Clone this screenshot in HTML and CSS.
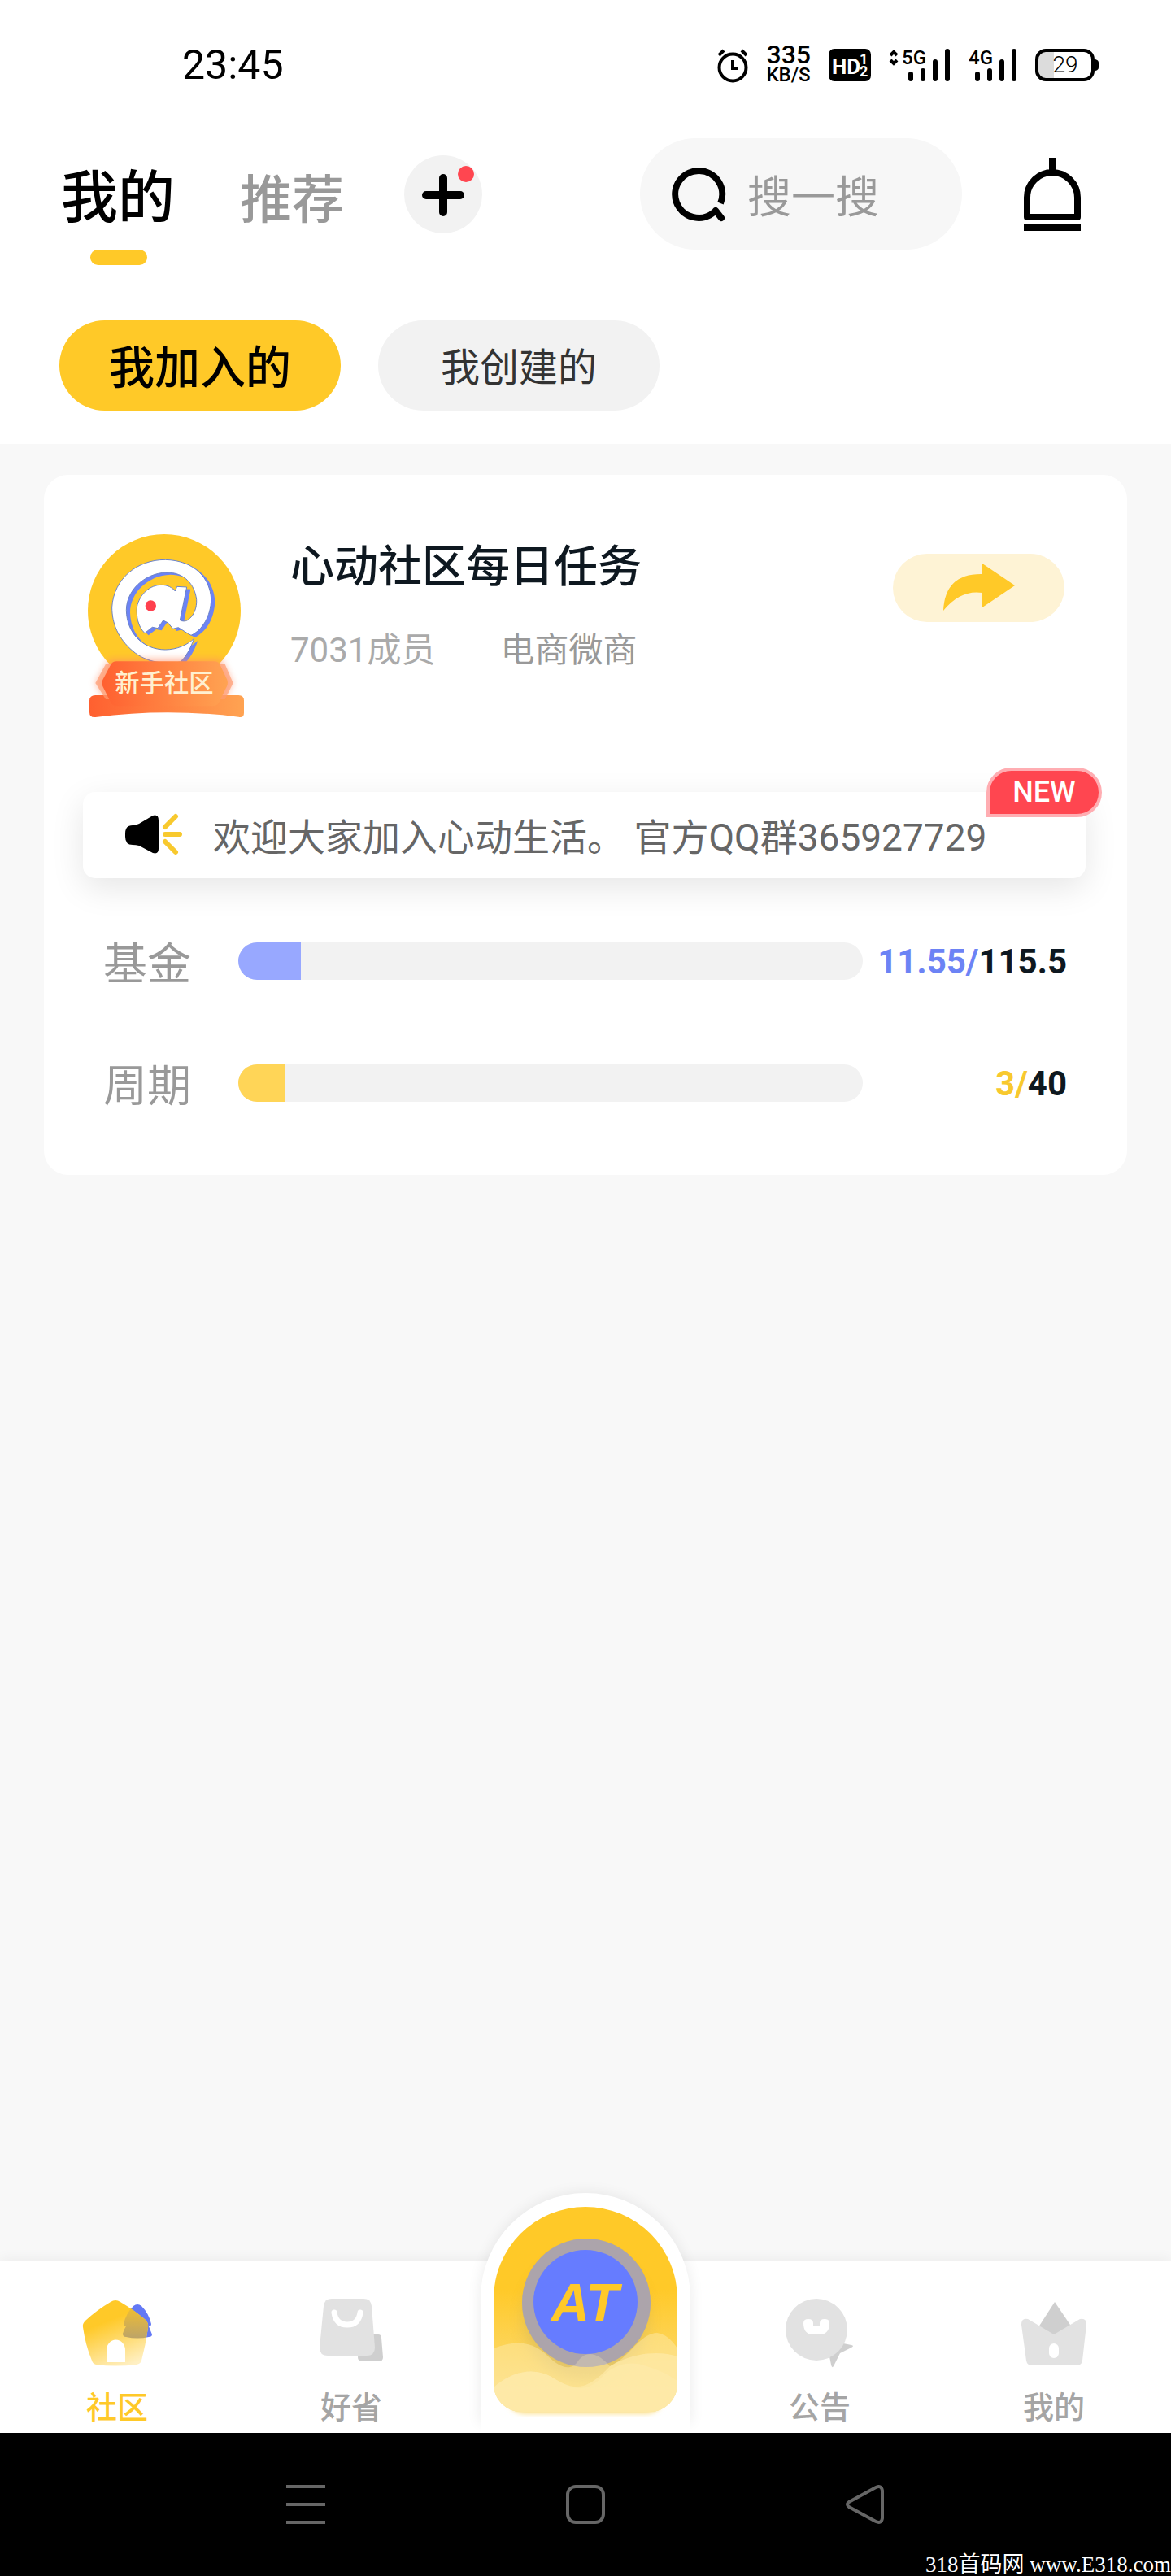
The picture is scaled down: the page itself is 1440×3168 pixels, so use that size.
FILE: index.html
```
<!DOCTYPE html>
<html lang="zh-CN">
<head>
    <meta charset="UTF-8">
    <meta name="viewport" content="width=device-width, initial-scale=1.0">
    <title>我的社区</title>
    <link rel="stylesheet" href="styles.css">
</head>
<body>
    <header class="header">
        <div class="status-bar">
            <span class="clock">23:45</span>
            <div class="status-icons">
                <svg width="38" height="42" viewBox="0 0 38 42" fill="none" stroke="#000" stroke-width="4">
                    <circle cx="19" cy="24" r="16.5"/>
                    <path d="M19 15v10h7M2 9l6-6M36 9l-6-6"/>
                </svg>
                <div class="net-speed"><span>335</span><small>KB/S</small></div>
                <svg width="52" height="40" viewBox="0 0 52 40">
                    <rect width="52" height="40" rx="7"/>
                    <text class="hd" x="4" y="31">HD</text>
                    <text class="hd-sub" x="38" y="19">1</text>
                    <text class="hd-sub" x="38" y="34">2</text>
                </svg>
                <svg width="76" height="40" viewBox="0 0 76 40">
                    <path d="M2 8l4-4 4 4M2 14l4 4 4-4" fill="none" stroke="#000" stroke-width="4"/>
                    <text class="net" x="16" y="19">5G</text>
                    <path d="M27 31v6M42 27v10M57 16v21M72 3v34" stroke="#000" stroke-width="6" stroke-linecap="round"/>
                </svg>
                <svg width="60" height="40" viewBox="0 0 60 40">
                    <text class="net" x="0" y="19">4G</text>
                    <path d="M11 31v6M26 27v10M41 16v21M56 3v34" stroke="#000" stroke-width="6" stroke-linecap="round"/>
                </svg>
                <svg width="78" height="40" viewBox="0 0 78 40">
                    <path d="M12 4h11v32H12a8 8 0 0 1-8-8V12a8 8 0 0 1 8-8z" fill="#dcdcdc"/>
                    <rect x="2" y="2" width="69" height="36" rx="11" fill="none" stroke="#000" stroke-width="4"/>
                    <path d="M74 13q4 1 4 4v6q0 3-4 4z"/>
                    <text class="battery" x="37" y="29">29</text>
                </svg>
            </div>
        </div>

        <div class="topbar">
            <nav class="tabs">
                <a href="#" class="tab active">我的</a>
                <a href="#" class="tab">推荐</a>
            </nav>
            <button class="add-btn" aria-label="添加">
                <svg width="96" height="96" viewBox="0 0 96 96">
                    <path d="M48 28v42M27 49h42" stroke="#000" stroke-width="10" stroke-linecap="round"/>
                    <circle cx="76" cy="23" r="10" fill="#ff4650"/>
                </svg>
            </button>
            <label class="search">
                <svg width="68" height="68" viewBox="0 0 68 68" fill="none" stroke="#000" stroke-width="8" stroke-linecap="round">
                    <path d="M61 45A29 29 0 1 0 53 56" stroke-linecap="butt"/>
                    <path d="M55 54l7 9"/>
                </svg>
                <input type="text" placeholder="搜一搜" aria-label="搜索">
            </label>
            <button class="bell-btn" aria-label="通知">
                <svg width="70" height="90" viewBox="0 0 70 90" fill="none" stroke="#000" stroke-width="8">
                    <path d="M35 0v17M4 73V49a31 31 0 0 1 62 0v24z" stroke-linejoin="round"/>
                    <path d="M0 86h70"/>
                </svg>
            </button>
        </div>

        <div class="filters">
            <button class="filter active">我加入的</button>
            <button class="filter">我创建的</button>
        </div>
    </header>

    <main class="content">
        <section class="card">
            <div class="card-head">
                <svg class="avatar" viewBox="75 75 600 705">
                    <defs>
                        <linearGradient id="ribbon" x1="0" x2="1">
                            <stop offset="0" stop-color="#ff6030"/>
                            <stop offset="1" stop-color="#ffa352"/>
                        </linearGradient>
                        <filter id="glow" x="-20%" y="-20%" width="140%" height="140%">
                            <feGaussianBlur stdDeviation="12"/>
                        </filter>
                        <path id="at" d="M476 466 C462 505 445 535 425 552 C370 562 300 555 250 512 C195 465 173 410 173 350 C180 245 265 175 370 175 C480 178 535 245 539 320 C538 385 505 435 465 454 C450 446 432 434 418 425 L398 430 L380 408 L362 399 L342 428 L322 424 L294 446 C268 420 263 385 265 350 C275 300 315 268 355 268 C378 268 396 278 406 291 L413 274 L449 276 L424 398 C432 403 444 403 452 398 C476 383 487 350 485 322 C478 265 440 222 375 222 C290 225 226 290 226 362 C228 445 285 506 370 507 C415 506 450 490 476 466 Z"/>
                    </defs>
                    <circle cx="366" cy="363" r="282" fill="#ffc928"/>
                    <use href="#at" x="14" y="8" fill="#6c83f5"/>
                    <use href="#at" fill="#fff" stroke="#6c83c5" stroke-width="3"/>
                    <circle cx="316" cy="345" r="20" fill="#ff404e"/>
                    <path d="M165 540H575L620 630L585 690H150L110 630Z" fill="#ff8b62" opacity=".55" filter="url(#glow)"/>
                    <path d="M112 675H640Q660 675 660 695V740Q660 760 640 755Q375 722 112 756Q90 758 90 738V695Q90 675 112 675Z" fill="url(#ribbon)"/>
                    <path d="M150 560H590L620 630L590 690H150L112 630Z" fill="#ff9b70" opacity=".7"/>
                    <path d="M190 550H550Q565 550 572 563L598 618Q602 630 597 642L567 703Q560 715 545 715H190Q176 715 169 703L139 642Q134 630 139 618L168 563Q175 550 190 550Z" fill="url(#ribbon)"/>
                    <text class="avatar-text" x="366" y="662">新手社区</text>
                </svg>
                <div class="info">
                    <h2 class="title">心动社区每日任务</h2>
                    <p class="meta"><span class="members">7031成员</span><span>电商微商</span></p>
                </div>
                <button class="share-btn" aria-label="分享">
                    <svg width="90" height="60" viewBox="0 0 90 60" fill="#ffc928">
                        <path d="M49 0L89 27L49 54V36Q22 32 1 58Q3 12 49 13Z"/>
                    </svg>
                </button>
            </div>

            <div class="notice">
                <svg width="70" height="52" viewBox="0 0 70 52">
                    <path d="M0 24Q0 14 9 14Q13 14 17 12L34 2Q41 0 41 8V43Q41 50 34 48L17 39Q13 38 9 38Q0 38 0 28Z"/>
                    <path d="M49 16L62 3M49 25H67M49 34L62 47" stroke="#f8c92e" stroke-width="6" stroke-linecap="round"/>
                </svg>
                <p class="notice-text">欢迎大家加入心动生活。 官方QQ群365927729</p>
                <span class="badge">NEW</span>
            </div>

            <div class="goals">
                <div class="goal">
                    <span class="goal-label">基金</span>
                    <div class="bar"><div class="fill blue" style="width: 10%"></div></div>
                    <span class="goal-value"><span class="blue-text">11.55/</span>115.5</span>
                </div>
                <div class="goal">
                    <span class="goal-label">周期</span>
                    <div class="bar"><div class="fill yellow" style="width: 7.5%"></div></div>
                    <span class="goal-value"><span class="yellow-text">3/</span>40</span>
                </div>
            </div>
        </section>
    </main>

    <nav class="tabbar">
        <a href="#" class="tabbar-item active">
            <svg width="90" height="90" viewBox="0 0 90 90">
                <defs>
                    <linearGradient id="house" x1=".3" y1="0" x2=".7" y2="1">
                        <stop offset=".3" stop-color="#ffc928"/>
                        <stop offset="1" stop-color="#fff0c4"/>
                    </linearGradient>
                    <linearGradient id="tree-shade" x1="0" y1="0" x2="0" y2="1">
                        <stop offset="0" stop-color="#f5c02c"/>
                        <stop offset="1" stop-color="#bda468"/>
                    </linearGradient>
                    <path id="house-shape" d="M37 7Q43 3 49 7Q66 17 80 29Q84 33 83 39Q80 60 75 79Q74 83 69 84Q43 87 19 84Q15 83 14 79Q6 60 3 38Q2 34 6 30Q20 17 37 7Z"/>
                    <path id="tree" d="M65 12Q70 8 75 12Q84 21 87 34Q87 37 84 37Q86 42 88 47Q88 50 84 50Q70 53 56 50Q52 50 52 46Q53 41 56 37Q53 37 53 34Q56 21 65 12Z"/>
                    <clipPath id="house-clip"><use href="#house-shape"/></clipPath>
                </defs>
                <use href="#tree" fill="#6379f5"/>
                <use href="#house-shape" fill="url(#house)"/>
                <use href="#tree" fill="url(#tree-shade)" clip-path="url(#house-clip)"/>
                <path d="M32 81V66A11 12 0 0 1 55 66V81Z" fill="#fff"/>
            </svg>
            <span>社区</span>
        </a>
        <a href="#" class="tabbar-item">
            <svg width="90" height="90" viewBox="0 0 90 90">
                <path d="M57 47H78Q82 47 82 51L84 75Q84 80 79 80H58Q53 80 53 75Z" fill="#cfcfcf"/>
                <path d="M21 3H60Q69 3 70 12L74 63Q74 73 64 73H16Q6 73 6 63L11 12Q12 3 21 3Z" fill="#e2e2e2"/>
                <path d="M24 20Q26 35 40 35Q54 35 56 20" fill="none" stroke="#fff" stroke-width="7" stroke-linecap="round"/>
            </svg>
            <span>好省</span>
        </a>
        <a href="#" class="tabbar-item center" aria-label="AT">
            <svg class="center-icon" width="300" height="302" viewBox="0 0 300 302">
                <defs>
                    <linearGradient id="arch" x1="0" y1="0" x2="0" y2="1">
                        <stop offset=".4" stop-color="#ffc928"/>
                        <stop offset="1" stop-color="#fbe08a"/>
                    </linearGradient>
                    <filter id="soft" x="-20%" y="-20%" width="140%" height="140%">
                        <feGaussianBlur stdDeviation="9"/>
                    </filter>
                    <filter id="edge" x="-10%" y="-10%" width="120%" height="120%">
                        <feGaussianBlur stdDeviation="3"/>
                    </filter>
                    <path id="arch-shape" d="M37 137A113 113 0 0 1 263 137V242A34 34 0 0 1 229 276H71A34 34 0 0 1 37 242Z"/>
                    <clipPath id="arch-clip"><use href="#arch-shape"/></clipPath>
                </defs>
                <path d="M21 136A129 129 0 0 1 279 136V290H21Z" fill="#000" opacity=".08" filter="url(#soft)"/>
                <path d="M21 136A129 129 0 0 1 279 136V302H21Z" fill="#fff"/>
                <rect x="55" y="240" width="190" height="38" rx="20" fill="#fbdc7c" filter="url(#edge)"/>
                <use href="#arch-shape" fill="url(#arch)"/>
                <g clip-path="url(#arch-clip)">
                    <circle cx="150" cy="160" r="76" fill="#a89a70" opacity=".3" filter="url(#soft)"/>
                    <circle cx="151" cy="142" r="79" fill="#b5aa9b"/>
                    <path d="M37 198C62 188 82 189 100 204C118 222 132 228 142 212C152 200 166 204 180 220C206 208 216 180 238 179Q252 181 263 198V276H37Z" fill="#fde9a8" opacity=".5"/>
                    <path d="M37 246C62 224 88 222 108 233C135 250 150 252 168 236C182 218 205 212 225 220Q246 226 263 238V276H37Z" fill="#fde9a8" opacity=".8"/>
                    <path d="M180 220C206 204 240 200 263 208V276H37V246C62 224 88 222 108 233C135 250 150 252 180 220Z" fill="#fde9a8" opacity=".7"/>
                    <circle cx="151" cy="142" r="79" fill="#9c9cc8" opacity=".35"/>
                </g>
                <circle cx="150" cy="141" r="64" fill="#667cff"/>
                <text class="at-text" x="149" y="165">AT</text>
            </svg>
        </a>
        <a href="#" class="tabbar-item">
            <svg width="90" height="90" viewBox="0 0 90 90">
                <path d="M74 58L84 60Q88 61 84 63L70 70L62 86Q60 89 59 84L57 74Z" fill="#cfcfcf"/>
                <circle cx="41" cy="41" r="38" fill="#e2e2e2"/>
                <path d="M25 33Q25 28 31 28Q37 28 37 33V37H45V33Q45 28 51 28Q57 28 57 33Q57 47 45 47H37Q25 47 25 33Z" fill="#fff"/>
            </svg>
            <span>公告</span>
        </a>
        <a href="#" class="tabbar-item">
            <svg width="90" height="90" viewBox="0 0 90 90">
                <path d="M46 7L67 38L45 52L26 38Z" fill="#cfcfcf"/>
                <path d="M13 28L45 47L77 28Q85 26 85 35L80 79Q79 85 73 85H18Q12 85 11 79L5 35Q5 26 13 28Z" fill="#e2e2e2"/>
                <rect x="39" y="58" width="12" height="18" rx="6" fill="#fff"/>
            </svg>
            <span>我的</span>
        </a>
    </nav>

    <footer class="system-nav">
        <button aria-label="菜单">
            <svg width="48" height="48" viewBox="0 0 48 48" fill="none" stroke="#666" stroke-width="4">
                <path d="M0 2h48M0 24h48M0 46h48"/>
            </svg>
        </button>
        <button aria-label="主页">
            <svg width="48" height="48" viewBox="0 0 48 48" fill="none" stroke="#666" stroke-width="4">
                <rect x="2" y="2" width="44" height="44" rx="10"/>
            </svg>
        </button>
        <button aria-label="返回">
            <svg width="48" height="48" viewBox="0 0 48 48" fill="none" stroke="#666" stroke-width="4">
                <path d="M4 21L37 3Q44 0 45 7V41Q44 48 37 45L4 27Q0 24 4 21Z"/>
            </svg>
        </button>
        <span class="watermark">318首码网 www.E318.com</span>
    </footer>
</body>
</html>
```

FILE: styles.css
```
* {
    box-sizing: border-box;
}
body {
    margin: 0;
    min-height: 100vh;
    display: flex;
    flex-direction: column;
    background-color: #f8f8f8;
    color: #000;
    font-family: Roboto, "Noto Sans CJK SC", sans-serif;
}
button {
    border: none;
    padding: 0;
    background: none;
    color: inherit;
    font-family: "Noto Sans CJK SC", sans-serif;
    cursor: pointer;
}
a {
    color: inherit;
    text-decoration: none;
}
svg {
    display: block;
    flex-shrink: 0;
    overflow: visible;
}
h2, p {
    margin: 0;
}

/* Header */
.header {
    background: white;
    padding-bottom: 41px;
}
.status-bar {
    display: flex;
    align-items: center;
    justify-content: space-between;
    height: 160px;
    padding: 0 89px 0 224px;
}
.clock {
    font-size: 50px;
}
.status-icons {
    display: flex;
    align-items: center;
    gap: 22px;
}
.net-speed {
    display: flex;
    flex-direction: column;
    font-size: 32px;
    font-weight: 500;
    line-height: 25px;
}
.net-speed small {
    font-size: 24px;
}
.hd {
    fill: white;
    font-size: 26px;
    font-weight: 700;
}
.hd-sub {
    fill: white;
    font-size: 18px;
    font-weight: 700;
}
.net {
    font-size: 24px;
    font-weight: 500;
}
.battery {
    font-size: 28px;
    font-weight: 300;
    text-anchor: middle;
}
.topbar {
    display: flex;
    align-items: center;
    margin-top: 10px;
    padding: 0 111px 0 75px;
}
.tabs {
    display: flex;
    align-items: baseline;
    gap: 80px;
    margin-right: 74px;
    font-family: "Noto Sans CJK SC", sans-serif;
}
.tab {
    color: #999;
    font-size: 64px;
    font-weight: 500;
    line-height: 100px;
}
.tab.active {
    position: relative;
    color: #000;
    font-size: 70px;
}
.tab.active::after {
    content: "";
    position: absolute;
    left: 36px;
    bottom: -38px;
    width: 70px;
    height: 19px;
    border-radius: 10px;
    background: #ffc928;
}
.add-btn {
    border-radius: 50%;
    background: #f2f2f2;
}
.search {
    display: flex;
    align-items: center;
    gap: 26px;
    width: 396px;
    height: 137px;
    margin-left: auto;
    margin-right: 76px;
    padding: 0 38px;
    border-radius: 69px;
    background: #f7f7f7;
}
.search input {
    width: 100%;
    min-width: 0;
    border: none;
    outline: none;
    padding: 0;
    background: none;
    font-family: "Noto Sans CJK SC", sans-serif;
    font-size: 54px;
}
.search input::placeholder {
    color: #999;
}
.filters {
    display: flex;
    gap: 46px;
    margin-top: 87px;
    padding: 0 73px;
}
.filter {
    width: 346px;
    height: 111px;
    padding-bottom: 4px;
    border-radius: 56px;
    background: #f2f2f2;
    color: #333;
    font-size: 48px;
}
.filter.active {
    background: #ffc928;
    color: #000;
    font-size: 56px;
    font-weight: 500;
}

/* Community card */
.content {
    flex: 1;
    padding: 38px 54px;
}
.card {
    padding: 71px 51px 73px 48px;
    border-radius: 30px;
    background: white;
}
.card-head {
    display: flex;
    align-items: flex-start;
    padding: 0 26px 0 3px;
}
.avatar {
    width: 200px;
    height: 235px;
}
.avatar-text {
    fill: #fff0d0;
    font-family: "Noto Sans CJK SC", sans-serif;
    font-size: 91px;
    font-weight: 500;
    text-anchor: middle;
}
.info {
    flex: 1;
    padding-left: 52px;
}
.title {
    color: #0e1820;
    font-family: "Noto Sans CJK SC", sans-serif;
    font-size: 54px;
    font-weight: 500;
    line-height: 76px;
}
.meta {
    display: flex;
    gap: 80px;
    margin-top: 31px;
    color: #999;
    font-size: 42px;
    line-height: 76px;
}
.members {
    color: #aaa;
}
.share-btn {
    display: flex;
    align-items: center;
    justify-content: center;
    width: 211px;
    height: 84px;
    margin-top: 26px;
    border-radius: 42px;
    background: #fef3d5;
}
.notice {
    position: relative;
    display: flex;
    align-items: center;
    gap: 38px;
    height: 106px;
    margin-top: 84px;
    padding: 0 52px;
    border-radius: 15px;
    background: white;
    box-shadow: 0 12px 40px rgba(0, 0, 0, 0.1);
}
.notice-text {
    padding-top: 6px;
    color: #666;
    font-size: 46px;
    line-height: 60px;
    white-space: nowrap;
}
.badge {
    position: absolute;
    top: -30px;
    right: -20px;
    width: 142px;
    height: 61px;
    border: 4px solid #ffadb2;
    border-radius: 31px 31px 31px 0;
    background: #ff4650;
    color: white;
    font-size: 36px;
    font-weight: 500;
    line-height: 53px;
    text-align: center;
}
.goals {
    display: flex;
    flex-direction: column;
    gap: 70px;
    margin-top: 62px;
    padding: 0 23px 0 25px;
}
.goal {
    display: grid;
    grid-template-columns: 166px 1fr 251px;
    align-items: center;
    height: 80px;
}
.goal-label {
    color: #999;
    font-family: "Noto Sans CJK SC", sans-serif;
    font-size: 54px;
    line-height: 80px;
}
.bar {
    height: 46px;
    border-radius: 23px;
    background: #f2f2f2;
    overflow: hidden;
}
.fill {
    height: 100%;
}
.fill.blue {
    background: #98a8ff;
}
.fill.yellow {
    background: #ffd557;
}
.goal-value {
    color: #0e1820;
    font-size: 42px;
    font-weight: 700;
    text-align: right;
}
.blue-text {
    color: #6c83f5;
}
.yellow-text {
    color: #f8c92e;
}

/* Bottom tabs */
.tabbar {
    display: flex;
    height: 211px;
    background: white;
    box-shadow: 0 -2px 16px rgba(0, 0, 0, 0.06);
}
.tabbar-item {
    position: relative;
    flex: 1;
    display: flex;
    flex-direction: column;
    align-items: center;
    padding-top: 43px;
    color: #a5a5a5;
    font-family: "Noto Sans CJK SC", sans-serif;
    font-size: 38px;
    font-weight: 500;
    line-height: 56px;
}
.tabbar-item span {
    margin-top: 16px;
}
.tabbar-item.active {
    color: #ffc928;
}
.center-icon {
    position: absolute;
    bottom: 0;
    left: 50%;
    margin-left: -150px;
}
.at-text {
    fill: #ffc928;
    font-family: "Liberation Sans", sans-serif;
    font-size: 66px;
    font-style: italic;
    font-weight: 700;
    text-anchor: middle;
}

/* System navigation */
.system-nav {
    position: relative;
    display: flex;
    align-items: center;
    justify-content: center;
    gap: 296px;
    height: 176px;
    background: #000;
}
.watermark {
    position: absolute;
    right: 0;
    bottom: 0;
    color: white;
    font-family: "Liberation Serif", "Noto Sans CJK SC", serif;
    font-size: 27px;
    line-height: 28px;
}
```
